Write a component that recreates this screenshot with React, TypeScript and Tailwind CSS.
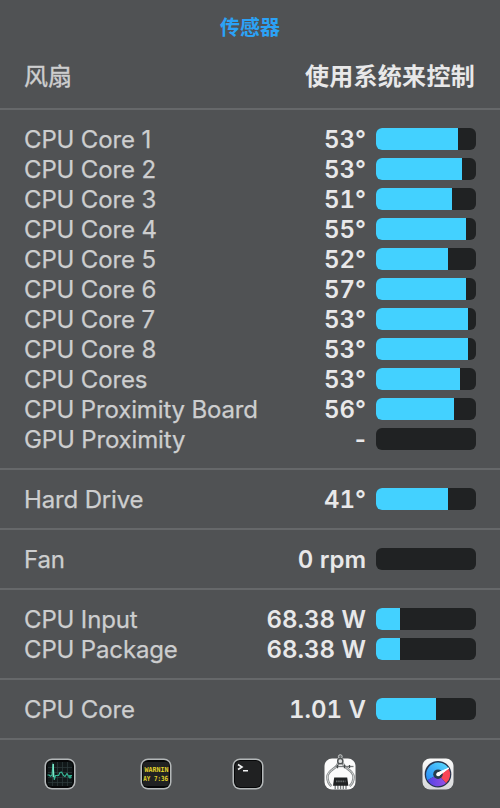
type Sensor = { label: string; value: string; fill: number };

const groups: Sensor[][] = [
  [
    { label: 'CPU Core 1', value: '53°', fill: 82 },
    { label: 'CPU Core 2', value: '53°', fill: 86 },
    { label: 'CPU Core 3', value: '51°', fill: 76 },
    { label: 'CPU Core 4', value: '55°', fill: 90 },
    { label: 'CPU Core 5', value: '52°', fill: 72 },
    { label: 'CPU Core 6', value: '57°', fill: 90 },
    { label: 'CPU Core 7', value: '53°', fill: 92 },
    { label: 'CPU Core 8', value: '53°', fill: 92 },
    { label: 'CPU Cores', value: '53°', fill: 84 },
    { label: 'CPU Proximity Board', value: '56°', fill: 78 },
    { label: 'GPU Proximity', value: '-', fill: 0 },
  ],
  [{ label: 'Hard Drive', value: '41°', fill: 72 }],
  [{ label: 'Fan', value: '0 rpm', fill: 0 }],
  [
    { label: 'CPU Input', value: '68.38 W', fill: 24 },
    { label: 'CPU Package', value: '68.38 W', fill: 24 },
  ],
  [{ label: 'CPU Core', value: '1.01 V', fill: 60 }],
];

function SensorRow({ label, value, fill }: Sensor) {
  return (
    <div className="flex h-[30px] items-center">
      <span className="flex-1 whitespace-nowrap pt-[2px] tracking-[-0.15px] text-[#cdcecf] [-webkit-text-stroke:0.25px]">{label}</span>
      <span className={`mr-[10px] whitespace-nowrap pt-[2px] font-semibold text-[#e8e8e9] ${value === '-' ? '' : 'tabular-nums'}`}>{value}</span>
      <div className="h-[22px] w-[100px] overflow-hidden rounded-[6px] bg-[#202223]">
        <div className="h-full bg-[#43d1ff]" style={{ width: `${fill}%` }} />
      </div>
    </div>
  );
}

function DarkTile() {
  return (
    <>
      <rect x="0.5" y="0.5" width="31" height="31" rx="7.5" fill="#b4b8b9" />
      <rect x="2" y="2" width="28" height="28" rx="6" fill="#060708" />
    </>
  );
}

function ActivityIcon() {
  return (
    <svg width="32" height="32" viewBox="0 0 32 32">
      <DarkTile />
      <rect x="3.5" y="4" width="25" height="24" rx="3" fill="#111819" />
      <path d="M4 9.5H28M4 14.5H28M4 19.5H28M4 24.5H28M8.5 4V28M13.5 4V28M18.5 4V28M23.5 4V28" stroke="#2e3c3d" strokeWidth="0.7" />
      <path d="M3.5 17H5l1.5 1.2L8 17l1-11 1.3 15.5L11.5 17.5h3l1.5-3L17.5 14l2 3.5 1.5 1 2-3 1.5 2.7L26 17.5h2" fill="none" stroke="#36b696" strokeWidth="1.2" strokeLinejoin="round" />
      <path d="M9.3 6v13" stroke="#83e8cb" strokeWidth="1.3" />
      <circle cx="26" cy="19" r="1.6" fill="#2ba587" />
    </svg>
  );
}

function ConsoleIcon() {
  return (
    <svg width="32" height="32" viewBox="0 0 32 32">
      <DarkTile />
      <rect x="3" y="4" width="26" height="24" rx="3" fill="#202122" />
      <g fill="#e0d22b" fontFamily="DejaVu Sans Mono, monospace" fontSize="7" fontWeight="700">
        <text x="4.6" y="14" textLength="24" lengthAdjust="spacingAndGlyphs">WARNIN</text>
        <text x="3.2" y="23.2" textLength="25" lengthAdjust="spacingAndGlyphs">AY 7:36</text>
      </g>
    </svg>
  );
}

function TerminalIcon() {
  return (
    <svg width="32" height="32" viewBox="0 0 32 32">
      <DarkTile />
      <rect x="3" y="3" width="26" height="26" rx="5" fill="#202122" />
      <path d="M6 6.5l4 2.5-4 2.5M11 12.7h5" fill="none" stroke="#f1f2f2" strokeWidth="1.6" />
    </svg>
  );
}

function SystemInfoIcon() {
  return (
    <svg width="32" height="36" viewBox="0 -4 32 36">
      <rect x="0.5" y="0.5" width="31" height="31" rx="7.5" fill="#fbfbfb" />
      <path d="M14.2 5C13.2 11 3.6 11.5 3.4 19c0 4 1.6 7 4 9.2M18.8 5c1 6 10.6 6.5 10.8 14 0 4-1.6 7-4 9.2" fill="none" stroke="#85898a" strokeWidth="2.5" />
      <path d="M14.2 5C13.2 11 3.6 11.5 3.4 19c0 4 1.6 7 4 9.2M18.8 5c1 6 10.6 6.5 10.8 14 0 4-1.6 7-4 9.2" fill="none" stroke="#d2d4d4" strokeWidth="1" />
      <circle cx="16.3" cy="-1.4" r="1.9" fill="#6b6f70" stroke="#c3c6c6" strokeWidth="1" />
      <circle cx="16.3" cy="3.2" r="2.6" fill="#dfe1e1" stroke="#505455" strokeWidth="1.5" />
      <path d="M11.5 8.5h18" stroke="#777b7c" strokeWidth="1.3" />
      <path d="M13.5 6.8v3.4M20.5 6.8v3.4M25.5 7.1v2.8" stroke="#44494a" strokeWidth="1.3" />
      <path d="M11.2 27v4.3M13.9 27v4.3M16.6 27v4.3M19.3 27v4.3M22 27v4.3" stroke="#777c7d" strokeWidth="1.3" />
      <path d="M10.2 19.6h13l1.2 8.2H9z" fill="#202223" />
      <path d="M12 23.4h9.5" stroke="#686d6e" strokeWidth="1.8" strokeDasharray="1.5 .7" />
    </svg>
  );
}

function GaugeIcon() {
  return (
    <svg width="32" height="32" viewBox="0 0 32 32">
      <defs>
        <linearGradient id="tile" x1="0" y1="0" x2="0" y2="1">
          <stop stopColor="#fafafa" />
          <stop offset="1" stopColor="#d7d8da" />
        </linearGradient>
        <linearGradient id="cool" x1="0" y1="1" x2="1" y2="0">
          <stop stopColor="#2688f4" />
          <stop offset="1" stopColor="#59dcff" />
        </linearGradient>
        <linearGradient id="violet" x1="0" y1="0" x2="1" y2="0">
          <stop stopColor="#5143e5" />
          <stop offset="1" stopColor="#9850e6" />
        </linearGradient>
      </defs>
      <rect x="0.5" y="0.5" width="31" height="31" rx="7.5" fill="url(#tile)" />
      <circle cx="16" cy="16.2" r="13.3" fill="#26344e" />
      <path d="M16 16.2L5.5 22.3A12.1 12.1 0 1 1 27 11z" fill="url(#cool)" />
      <path d="M16 16.2L27 11A12.1 12.1 0 0 1 24 25.3z" fill="#fa4657" />
      <path d="M16 16.2L24 25.3A12.1 12.1 0 0 1 5.5 22.3z" fill="url(#violet)" />
      <circle cx="16" cy="16.2" r="4.8" fill="#263c4c" />
      <path d="M15.3 15L27 10 16.8 17.7z" fill="#fff" stroke="#fff" strokeWidth="1" strokeLinejoin="round" />
      <circle cx="16" cy="16.4" r="1.8" fill="#fff" />
    </svg>
  );
}

export default function App() {
  return (
    <main className="flex h-[808px] w-[500px] flex-col overflow-hidden bg-[#505254] font-['Inter','Noto_Sans_CJK_SC',sans-serif] text-[24px] leading-[30px]">
      <header className="h-[110px] border-b-2 border-[#66686a] font-['Noto_Sans_CJK_SC',sans-serif]">
        <h1 className="pt-[12px] text-center text-[20px] font-bold leading-[30px] text-[#2ba2f6]">传感器</h1>
        <div className="mt-[18px] flex justify-between pl-6 pr-[25px] leading-[30px]">
          <span className="text-[#cdcecf] [-webkit-text-stroke:0.4px]">风扇</span>
          <span className="tracking-[0.3px] font-bold text-[#e8e8e9]">使用系统来控制</span>
        </div>
      </header>
      {groups.map((rows, i) => (
        <section key={i} className="border-b-2 border-[#66686a] px-6 py-[14px]">
          {rows.map((row) => (
            <SensorRow key={row.label} {...row} />
          ))}
        </section>
      ))}
      <footer className="flex items-end pl-[44px] pt-[14px]">
        <ActivityIcon />
        <div className="ml-16"><ConsoleIcon /></div>
        <div className="ml-[60px]"><TerminalIcon /></div>
        <div className="ml-[60px]"><SystemInfoIcon /></div>
        <div className="ml-[66px]"><GaugeIcon /></div>
      </footer>
    </main>
  );
}
